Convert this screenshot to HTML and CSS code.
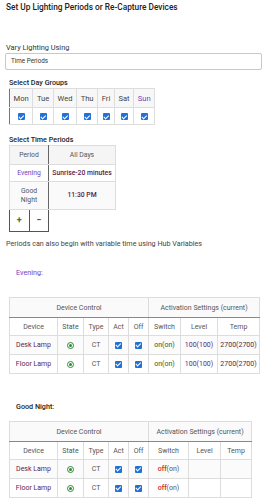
FILE: index.html
```html
<!DOCTYPE html>
<html lang="en">
<head>
    <meta charset="UTF-8">
    <meta name="viewport" content="width=device-width, initial-scale=1.0">
    <title>Lighting Periods</title>
    <link rel="stylesheet" href="styles.css">
</head>
<body>
    <div class="page">
        <h1 class="title">Set Up Lighting Periods or Re-Capture Devices</h1>

        <!-- mode selector -->
        <div class="field-label">Vary Lighting Using</div>
        <div class="select-box">Time Periods</div>

        <div class="group">
            <div class="group-label">Select Day Groups</div>
            <table class="days">
                <tr>
                    <th>Mon</th><th>Tue</th><th>Wed</th><th>Thu</th><th>Fri</th><th>Sat</th><th class="purple">Sun</th>
                </tr>
                <tr>
                    <td><span class="cb"></span></td>
                    <td><span class="cb"></span></td>
                    <td><span class="cb"></span></td>
                    <td><span class="cb"></span></td>
                    <td><span class="cb"></span></td>
                    <td><span class="cb"></span></td>
                    <td><span class="cb"></span></td>
                </tr>
            </table>
        </div>

        <div class="group periods-group">
            <div class="group-label">Select Time Periods</div>
            <table class="periods">
                <tr>
                    <th class="col-period">Period</th>
                    <th class="col-days">All Days</th>
                </tr>
                <tr>
                    <td class="purple">Evening</td>
                    <td class="time">Sunrise-20 minutes</td>
                </tr>
                <tr class="tall">
                    <td>Good<br>Night</td>
                    <td class="time">11:30 PM</td>
                </tr>
            </table>
            <div class="period-buttons">
                <span class="pbtn plus">+</span><span class="pbtn minus">&minus;</span>
            </div>
        </div>

        <p class="note">Periods can also begin with variable time using Hub Variables</p>

        <div class="period-name evening">Evening:</div>
        <table class="devices wide">
            <colgroup>
                <col class="c-device"><col class="c-state"><col class="c-type"><col class="c-act"><col class="c-off">
                <col class="c-switch"><col class="c-level"><col class="c-temp">
            </colgroup>
            <tr class="head1">
                <th colspan="5">Device Control</th>
                <th colspan="3" class="split">Activation Settings (current)</th>
            </tr>
            <tr class="head2">
                <th>Device</th><th>State</th><th>Type</th><th>Act</th><th>Off</th>
                <th class="split">Switch</th><th>Level</th><th>Temp</th>
            </tr>
            <tr>
                <td class="dev">Desk Lamp</td>
                <td><span class="state"></span></td>
                <td>CT</td>
                <td><span class="cb"></span></td>
                <td><span class="cb"></span></td>
                <td class="split on">on(on)</td>
                <td class="lvl">100(100)</td>
                <td class="tmp">2700(2700)</td>
            </tr>
            <tr>
                <td class="dev">Floor Lamp</td>
                <td><span class="state"></span></td>
                <td>CT</td>
                <td><span class="cb"></span></td>
                <td><span class="cb"></span></td>
                <td class="split on">on(on)</td>
                <td class="lvl">100(100)</td>
                <td class="tmp">2700(2700)</td>
            </tr>
        </table>

        <div class="period-name night">Good Night:</div>
        <table class="devices narrow">
            <colgroup>
                <col class="c-device"><col class="c-state"><col class="c-type"><col class="c-act"><col class="c-off">
                <col class="c-switch2"><col class="c-level2"><col class="c-temp2">
            </colgroup>
            <tr class="head1">
                <th colspan="5">Device Control</th>
                <th colspan="3" class="split">Activation Settings (current)</th>
            </tr>
            <tr class="head2">
                <th>Device</th><th>State</th><th>Type</th><th>Act</th><th>Off</th>
                <th class="split">Switch</th><th>Level</th><th>Temp</th>
            </tr>
            <tr>
                <td class="dev">Desk Lamp</td>
                <td><span class="state"></span></td>
                <td>CT</td>
                <td><span class="cb"></span></td>
                <td><span class="cb"></span></td>
                <td class="split"><span class="off">off</span>(on)</td>
                <td></td>
                <td></td>
            </tr>
            <tr>
                <td class="dev">Floor Lamp</td>
                <td><span class="state"></span></td>
                <td>CT</td>
                <td><span class="cb"></span></td>
                <td><span class="cb"></span></td>
                <td class="split"><span class="off">off</span>(on)</td>
                <td></td>
                <td></td>
            </tr>
        </table>
    </div>
</body>
</html>
```

FILE: styles.css
```css
body {
    margin: 0;
    background: #ffffff;
    color: #333;
    font-family: Roboto, "Liberation Sans", sans-serif;
}
.page {
    padding: 0 1px 20px 5px;
}
.title {
    margin: 0;
    padding-left: 1px;
    font-size: 8.3px;
    font-weight: 500;
    line-height: 14px;
    color: #222;
}
.field-label {
    margin-top: 29px;
    padding-left: 1px;
    font-size: 7.4px;
    line-height: 10px;
    color: #333;
}
.select-box {
    height: 15px;
    border: 1px solid #c8c8c8;
    border-radius: 2px;
    padding-left: 5px;
    font-size: 6.3px;
    line-height: 15px;
    color: #333;
}
.group {
    padding-left: 4px;
    margin-top: 8px;
}
.group-label {
    font-size: 7.2px;
    font-weight: 500;
    line-height: 10px;
    color: #222;
}
table {
    border-collapse: collapse;
}
.days {
    border: 1px solid #777;
}
.days th, .days td {
    border: 1px solid #ddd;
    text-align: center;
    padding: 0 3.6px;
    font-size: 7.6px;
    color: #444;
}
.days th {
    height: 18px;
    font-weight: 400;
    background: #f7f7f7;
}
.days td {
    height: 16px;
}
.days th:first-child, .days td:first-child {
    border-left: 1px solid #777;
}
.purple {
    color: #7440c0 !important;
}
.periods-group {
    margin-top: 10px;
}
.periods {
    border: 1px solid #666;
}
.periods th, .periods td {
    border: 1px solid #ddd;
    text-align: center;
    font-size: 6.8px;
    color: #555;
    padding: 0 2px;
}
.periods th {
    height: 18px;
    font-weight: 400;
    background: #f5f5f5;
}
.periods td {
    height: 16px;
}
.periods .tall td {
    height: 27px;
    line-height: 9px;
    background: #fafafa;
}
.periods .col-period {
    width: 34px;
    border-right: 1px solid #666;
}
.periods td:first-child {
    border-right: 1px solid #666;
}
.periods .col-days {
    width: 62px;
}
.periods .time {
    color: #5a1a4a;
    font-weight: 500;
    white-space: nowrap;
}
.period-buttons {
    display: flex;
    width: 40px;
}
.pbtn {
    width: 19px;
    height: 21px;
    line-height: 21px;
    text-align: center;
    font-size: 9px;
    font-weight: 700;
    border-bottom: 1px solid #555;
    border-right: 1px solid #555;
}
.pbtn.plus {
    border-left: 1px solid #555;
    color: #2e7d32;
}
.pbtn.minus {
    color: #7a3050;
}
.note {
    margin: 7px 0 0 1px;
    font-size: 7.2px;
    line-height: 10px;
    color: #444;
}
.period-name {
    padding-left: 11px;
    font-size: 7.2px;
    line-height: 10px;
}
.evening {
    margin-top: 19px;
    color: #7440c0;
}
.night {
    margin-top: 28px;
    font-weight: 500;
    color: #222;
}
.devices {
    margin-left: 4px;
    table-layout: fixed;
    border: 1px solid #555;
}
.devices.wide {
    width: 250px;
    margin-top: 19px;
}
.devices.narrow {
    width: 243px;
    margin-top: 9px;
}
.devices th, .devices td {
    border: 1px solid #ddd;
    text-align: center;
    font-size: 7px;
    font-weight: 400;
    color: #555;
    padding: 0;
    white-space: nowrap;
    overflow: visible;
}
.devices .head1 th {
    height: 19px;
    background: #fafafa;
    border-bottom: 1px solid #888;
}
.devices .head2 th {
    height: 17px;
}
.devices td {
    height: 18px;
}
.devices .split {
    border-left: 1px solid #555;
}
.devices tr:nth-child(odd) td {
    background: #fbfbfb;
}
.c-device { width: 48px; }
.c-state { width: 26px; }
.c-type { width: 25px; }
.c-act { width: 20px; }
.c-off { width: 20px; }
.c-switch { width: 32px; }
.c-level { width: 37px; }
.c-temp { width: 42px; }
.c-switch2 { width: 40px; }
.c-level2 { width: 32px; }
.c-temp2 { width: 31px; }
.devices .dev {
    color: #5e2350;
}
.devices .on {
    color: #2f5a18;
}
.devices .lvl {
    color: #5a2a7a;
}
.devices .tmp {
    color: #4a2a4a;
}
.off {
    color: #d32020;
    font-weight: 500;
}
.cb {
    display: inline-block;
    position: relative;
    width: 7px;
    height: 7px;
    background: #2172d6;
    border-radius: 1px;
    vertical-align: middle;
}
.cb::after {
    content: "";
    position: absolute;
    left: 2.2px;
    top: 0.6px;
    width: 1.6px;
    height: 3.6px;
    border: solid #fff;
    border-width: 0 1px 1px 0;
    transform: rotate(45deg);
}
.state {
    display: inline-block;
    position: relative;
    width: 5px;
    height: 5px;
    border: 1px solid #2e8b3a;
    border-radius: 50%;
    vertical-align: middle;
}
.state::after {
    content: "";
    position: absolute;
    left: 1px;
    top: 1px;
    width: 3px;
    height: 3px;
    border-radius: 50%;
    background: #2e8b3a;
}
```
